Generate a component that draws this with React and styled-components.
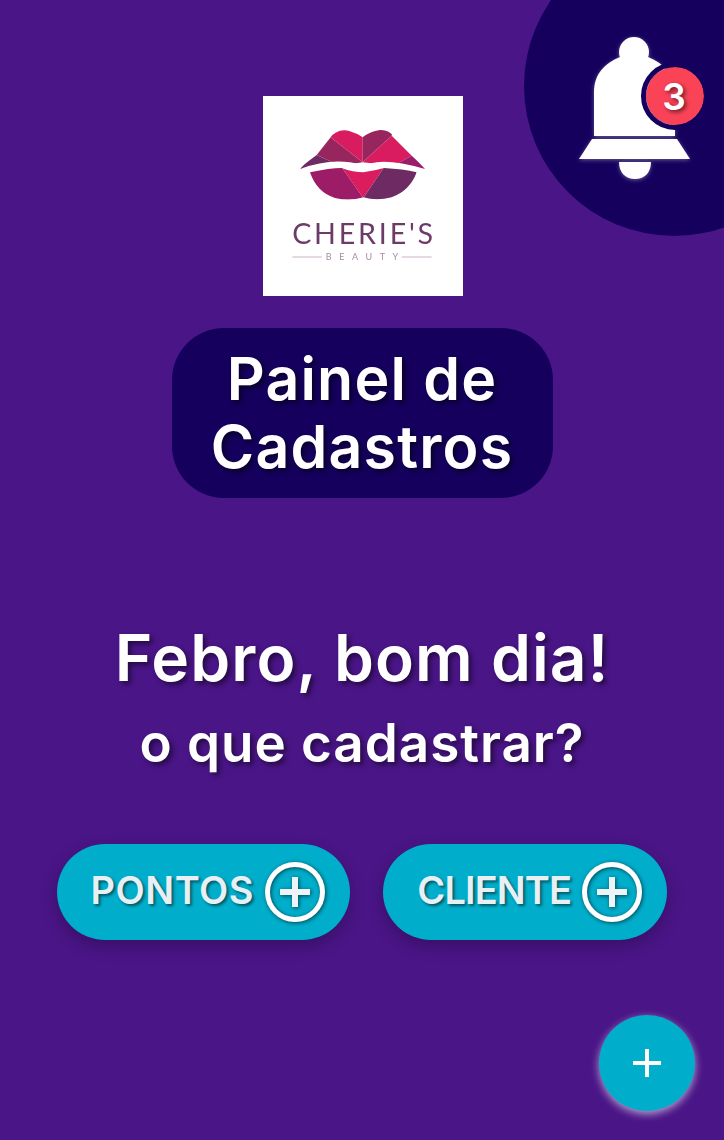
import React from "react";
import styled, { createGlobalStyle } from "styled-components";

const GlobalStyle = createGlobalStyle`
  html, body { margin: 0; padding: 0; background: #4a1587; }
  * { box-sizing: border-box; }
`;

const Page = styled.div`
  position: relative;
  width: 724px;
  height: 1140px;
  overflow: hidden;
  padding-top: 96px;
  display: flex;
  flex-direction: column;
  align-items: center;
  background: #4a1587;
  color: #fff;
  font-family: Inter, "Noto Sans", sans-serif;
`;

const BellCircle = styled.div`
  position: absolute;
  left: 524px;
  top: -64px;
  width: 300px;
  height: 300px;
  border-radius: 50%;
  background: #15005e;
`;

const BellIcon = styled.svg`
  position: absolute;
  left: 50px;
  top: 94px;
  width: 120px;
  height: 150px;
  filter: drop-shadow(0 1px 2px rgba(255, 255, 255, 0.35));
`;

const Badge = styled.div`
  position: absolute;
  left: 117px;
  top: 126px;
  width: 68px;
  height: 68px;
  padding-right: 2px;
  border: 5px solid #15005e;
  border-radius: 50%;
  background: #fb4358;
  background-clip: padding-box;
  display: flex;
  align-items: center;
  justify-content: center;
  font-size: 37px;
  font-weight: 600;
  text-shadow: 2px 2px 4px rgba(0, 0, 0, 0.6);
`;

const Logo = styled.svg`
  display: block;
  flex: none;
  width: 200px;
  height: 200px;
  margin-left: 1px;
  background: #fff;
`;

const TitlePill = styled.h1`
  margin: 32px 0 0;
  width: 381px;
  height: 170px;
  border-radius: 52px;
  background: #15005e;
  display: flex;
  align-items: center;
  justify-content: center;
  text-align: center;
  font-size: 59px;
  line-height: 68px;
  font-weight: 600;
  letter-spacing: 1.2px;
  text-shadow: 3px 3px 5px rgba(0, 0, 0, 0.55);
`;

const Greeting = styled.h2`
  margin: 120px 0 0;
  font-size: 64px;
  line-height: 80px;
  font-weight: 600;
  letter-spacing: 1.1px;
  text-shadow: 3px 3px 5px rgba(0, 0, 0, 0.5);
`;

const Question = styled.h3`
  margin: 15px 0 0;
  font-size: 53px;
  line-height: 60px;
  font-weight: 600;
  letter-spacing: 0.95px;
  text-shadow: 3px 3px 5px rgba(0, 0, 0, 0.5);
`;

const ButtonRow = styled.div`
  margin-top: 71px;
  display: flex;
  gap: 33px;
`;

const AddButton = styled.button`
  width: ${props => props.$width}px;
  height: 96px;
  border: 0;
  border-radius: 48px;
  padding: 0 23px 0 0;
  background: #00aecb;
  color: #e9f0f4;
  display: flex;
  align-items: center;
  justify-content: flex-end;
  gap: 9px;
  font-family: inherit;
  font-size: 38px;
  font-weight: 600;
  letter-spacing: ${props => props.$spacing}px;
  text-shadow: 2px 2px 3px rgba(0, 0, 0, 0.5);
  box-shadow: 0 6px 16px rgba(0, 0, 0, 0.25);
`;

const ButtonLabel = styled.span`
  position: relative;
  top: -2px;
`;

const PlusCircle = styled.svg`
  width: 64px;
  height: 64px;
  flex: none;
  filter: drop-shadow(1px 1px 2px rgba(0, 0, 0, 0.6));
`;

const Fab = styled.button`
  position: absolute;
  left: 599px;
  top: 1015px;
  width: 96px;
  height: 96px;
  border: 0;
  border-radius: 50%;
  padding: 0;
  background: #00aecb;
  display: flex;
  align-items: center;
  justify-content: center;
  box-shadow: 0 3px 8px rgba(255, 255, 255, 0.6);
`;

const FabPlus = styled.svg`
  width: 28px;
  height: 28px;
`;

function Plus() {
  return (
    <PlusCircle viewBox="0 0 64 64">
      <circle cx="32" cy="32" r="27.5" fill="none" stroke="#fff" strokeWidth="5" />
      <path d="M17 32H47M32 17V47" stroke="#eef3f6" strokeWidth="6" fill="none" />
    </PlusCircle>
  );
}

export default function App() {
  return (
    <Page>
      <GlobalStyle />
      <BellCircle>
        <BellIcon viewBox="0 0 120 150">
          <g fill="#fff">
            <circle cx="60" cy="22" r="15" />
            <path d="M20 106V62C20 44 31 33 46 27H74C89 33 101 44 101 62V106Z" />
            <path d="M18 109H103L116 129H5Z" />
            <path d="M45 132H77C77 143 70 149 61 149C52 149 45 143 45 132Z" />
          </g>
        </BellIcon>
        <Badge>3</Badge>
      </BellCircle>

      <Logo viewBox="9 6 600 600">
        <defs>
          <filter id="soft">
            <feGaussianBlur stdDeviation="1.8" />
          </filter>
          <clipPath id="upperLip">
            <path d="M120 225L205 135Q235 100 270 112Q295 120 308 130Q330 112 360 108Q385 106 405 130L495 225Q400 198 350 205Q310 215 270 205Q200 195 120 225Z" />
          </clipPath>
          <clipPath id="lowerLip">
            <path d="M150 235Q210 222 245 222Q280 235 310 235Q345 230 372 222Q430 225 470 235Q450 290 395 310Q350 322 310 310Q270 322 225 312Q170 295 150 235Z" />
          </clipPath>
        </defs>
        <g filter="url(#soft)">
          <g clipPath="url(#upperLip)">
            <path fill="#6d2a63" d="M100 235L170 183L240 215Z" />
            <path fill="#97265f" d="M170 183L212 130L308 205L240 215Z" />
            <path fill="#d81b5e" d="M212 130L235 90L308 100V205Z" />
            <path fill="#97265f" d="M308 100L400 90L395 125L308 205Z" />
            <path fill="#d81b5e" d="M395 125L455 185L400 215L308 205Z" />
            <path fill="#9a1a6a" d="M455 185L510 235L400 215Z" />
          </g>
          <g clipPath="url(#lowerLip)">
            <path fill="#9c1b67" d="M130 220H245L310 312L280 330H150Z" />
            <path fill="#db1a5e" d="M245 220H372L310 312Z" />
            <path fill="#6d2c63" d="M372 220H490L440 330H330L310 312Z" />
          </g>
          <path stroke="#c9b4c8" strokeWidth="3" d="M97 489H185M425 489H515" />
          <text x="308" y="450" textAnchor="middle" textLength="423" fontFamily="Lato, sans-serif" fontWeight="400" fontSize="86" fill="#6d3b68">
            CHERIE'S
          </text>
          <text x="306" y="498" textAnchor="middle" textLength="217" fontFamily="Lato, sans-serif" fontSize="27" fill="#a98aa6">
            BEAUTY
          </text>
        </g>
      </Logo>

      <TitlePill>
        Painel de
        <br />
        Cadastros
      </TitlePill>

      <Greeting>Febro, bom dia!</Greeting>
      <Question>o que cadastrar?</Question>

      <ButtonRow>
        <AddButton $width={293} $spacing={0.5}>
          <ButtonLabel>PONTOS</ButtonLabel>
          <Plus />
        </AddButton>
        <AddButton $width={284} $spacing={-0.9}>
          <ButtonLabel>CLIENTE</ButtonLabel>
          <Plus />
        </AddButton>
      </ButtonRow>

      <Fab aria-label="Adicionar">
        <FabPlus viewBox="0 0 28 28">
          <path d="M0 14H28M14 0V28" stroke="#fff" strokeWidth="4" fill="none" />
        </FabPlus>
      </Fab>
    </Page>
  );
}
